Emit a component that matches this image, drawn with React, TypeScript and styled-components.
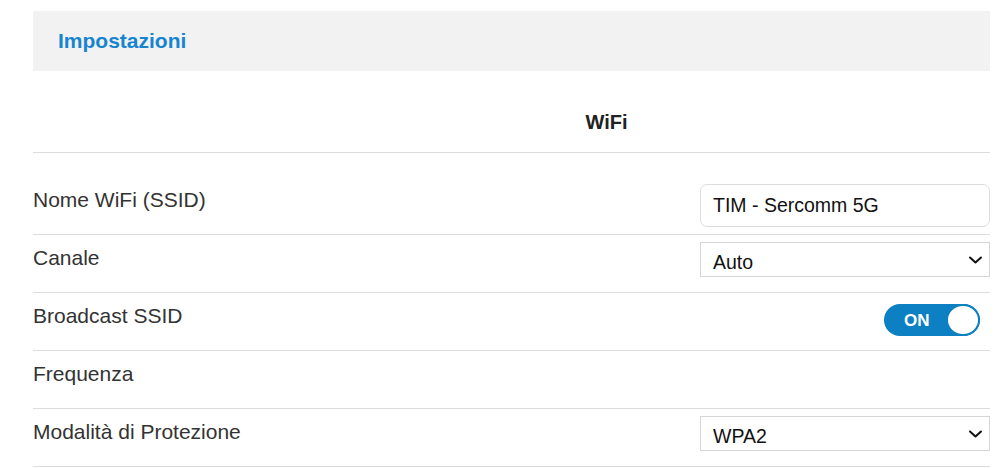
import React from "react";
import styled, { createGlobalStyle } from "styled-components";

const GlobalStyle = createGlobalStyle`
  html, body {
    margin: 0;
    padding: 0;
    background: #ffffff;
  }
  body {
    font-family: "Liberation Sans", Arial, sans-serif;
    color: #333333;
  }
  * { box-sizing: border-box; }
`;

const Page = styled.div`
  padding: 11px 18px 0 33px;
  width: 1008px;
`;

const Header = styled.header`
  height: 60px;
  background: #f2f2f2;
  display: flex;
  align-items: center;
  padding-left: 25px;
`;

const Title = styled.h1`
  margin: 0;
  font-size: 21px;
  font-weight: 700;
  color: #1784d0;
  line-height: 24px;
`;

const SectionTitle = styled.h2`
  margin: 39px 0 0 0;
  padding: 0 0 18px 190px;
  font-size: 20px;
  line-height: 24px;
  font-weight: 700;
  color: #222222;
  text-align: center;
  border-bottom: 1px solid #dddddd;
`;

const Row = styled.div<{ $top?: number; $bottom?: number }>`
  display: grid;
  grid-template-columns: 1fr 290px;
  align-items: start;
  min-height: 58px;
  padding-top: ${(p) => p.$top ?? 7}px;
  padding-bottom: ${(p) => p.$bottom ?? 0}px;
  border-bottom: 1px solid #dddddd;
`;

const Label = styled.div`
  font-size: 21px;
  line-height: 24px;
  color: #333333;
  padding-top: 4px;
`;

const TextInput = styled.input`
  width: 290px;
  height: 43px;
  border: 1px solid #dddddd;
  border-radius: 7px;
  padding: 0 0 0 12px;
  font-family: "Liberation Sans", Arial, sans-serif;
  font-size: 19.5px;
  color: #111111;
  background: #ffffff;
  outline: none;
`;

const SelectBox = styled.div`
  width: 290px;
  height: 35px;
  border: 1px solid #d6d6d6;
  display: flex;
  align-items: center;
  justify-content: space-between;
  padding: 0 5px 0 12px;
  font-size: 19.5px;
  color: #111111;
  background: #ffffff;
`;

const SelectValue = styled.span`
  padding-top: 5px;
`;

const Chevron = styled.svg`
  width: 16px;
  height: 10px;
  flex: none;
`;

const Switch = styled.div`
  justify-self: end;
  margin: 4px 10px 0 0;
  width: 96px;
  height: 32px;
  border-radius: 16px;
  background: #0d80c3;
  display: flex;
  align-items: center;
  justify-content: space-between;
  padding-left: 20px;
`;

const SwitchText = styled.span`
  font-size: 17px;
  font-weight: 700;
  color: #ffffff;
  line-height: 1;
`;

const Knob = styled.span`
  width: 34px;
  height: 32px;
  border-radius: 50%;
  background: #ffffff;
  border: 2px solid #0d80c3;
`;

const Select: React.FC<{ value: string }> = ({ value }) => (
  <SelectBox>
    <SelectValue>{value}</SelectValue>
    <Chevron viewBox="0 0 16 10">
      <polyline
        points="2,2.5 7.5,7.5 13,2.5"
        fill="none"
        stroke="#111"
        strokeWidth="2"
        strokeLinecap="round"
        strokeLinejoin="round"
      />
    </Chevron>
  </SelectBox>
);

export default function App() {
  return (
    <>
      <GlobalStyle />
      <Page>
        <Header>
          <Title>Impostazioni</Title>
        </Header>
        <SectionTitle>WiFi</SectionTitle>
        <Row $top={31} $bottom={7}>
          <Label>Nome WiFi (SSID)</Label>
          <TextInput defaultValue="TIM - Sercomm 5G" />
        </Row>
        <Row>
          <Label>Canale</Label>
          <Select value="Auto" />
        </Row>
        <Row>
          <Label>Broadcast SSID</Label>
          <Switch>
            <SwitchText>ON</SwitchText>
            <Knob />
          </Switch>
        </Row>
        <Row>
          <Label>Frequenza</Label>
        </Row>
        <Row>
          <Label>Modalità di Protezione</Label>
          <Select value="WPA2" />
        </Row>
      </Page>
    </>
  );
}
